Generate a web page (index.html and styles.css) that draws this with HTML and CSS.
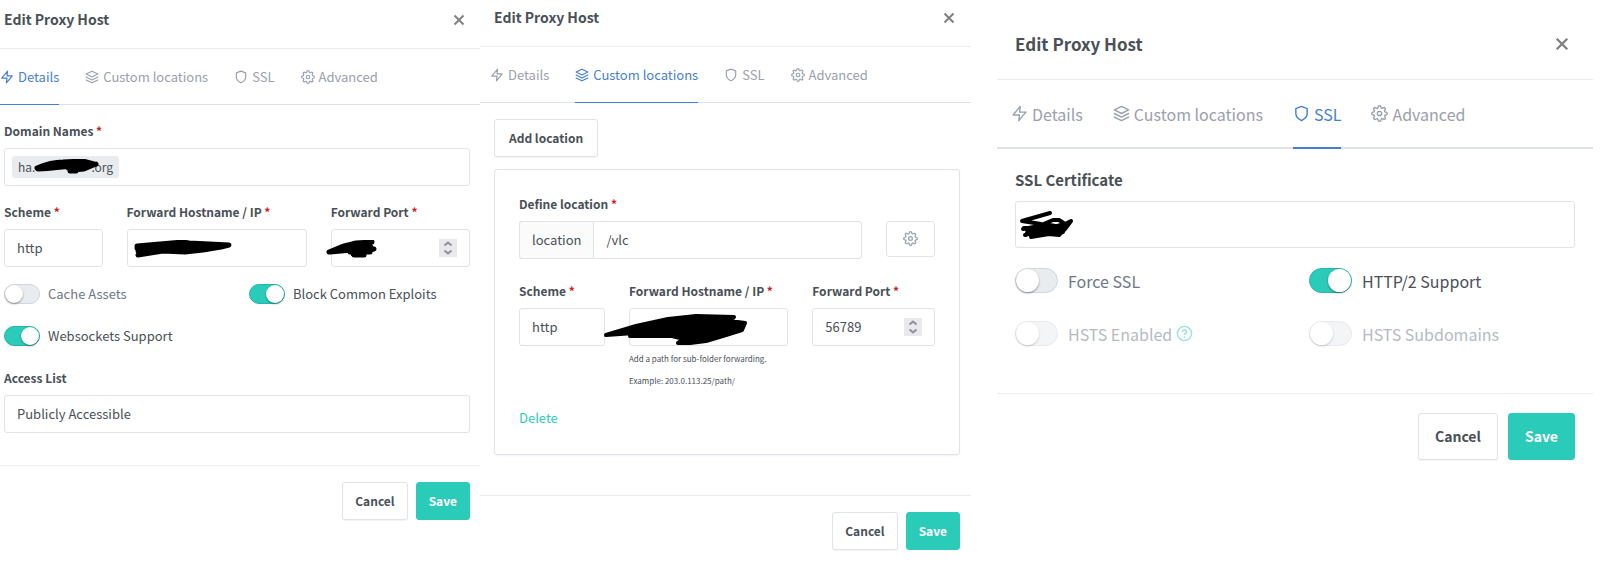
FILE: index.html
```html
<!DOCTYPE html>
<html lang="en">
<head>
<meta charset="utf-8">
<title>Edit Proxy Host</title>
<link rel="stylesheet" href="styles.css">
</head>
<body>
<svg class="sprite" aria-hidden="true">
  <symbol id="zap" viewBox="0 0 24 24"><path d="M13 2 3 14h9l-1 8 10-12h-9z"/></symbol>
  <symbol id="layers" viewBox="0 0 24 24"><path d="M12 2 2 7l10 5 10-5zM2 17l10 5 10-5M2 12l10 5 10-5"/></symbol>
  <symbol id="shield" viewBox="0 0 24 24"><path d="M12 22s8-4 8-10V5l-8-3-8 3v7c0 6 8 10 8 10z"/></symbol>
  <symbol id="settings" viewBox="0 0 24 24"><circle cx="12" cy="12" r="3"/><path d="M19.4 15a1.65 1.65 0 0 0 .33 1.82l.06.06a2 2 0 1 1-2.83 2.83l-.06-.06a1.65 1.65 0 0 0-2.8 1.17V21a2 2 0 0 1-4 0v-.09A1.65 1.65 0 0 0 9 19.4a1.65 1.65 0 0 0-1.82.33l-.06.06a2 2 0 1 1-2.83-2.83l.06-.06a1.65 1.65 0 0 0-1.17-2.8H3a2 2 0 0 1 0-4h.09A1.65 1.65 0 0 0 4.6 9a1.65 1.65 0 0 0-.33-1.82l-.06-.06a2 2 0 1 1 2.83-2.83l.06.06A1.65 1.65 0 0 0 9 4.6h.1A1.65 1.65 0 0 0 10 3.09V3a2 2 0 0 1 4 0v.09a1.65 1.65 0 0 0 2.8 1.17l.06-.06a2 2 0 1 1 2.83 2.83l-.06.06A1.65 1.65 0 0 0 19.4 9v.1a1.65 1.65 0 0 0 1.51 1H21a2 2 0 0 1 0 4h-.09a1.65 1.65 0 0 0-1.51 1z"/></symbol>
  <symbol id="help" viewBox="0 0 24 24"><circle cx="12" cy="12" r="10"/><path d="M9.09 9a3 3 0 0 1 5.83 1c0 2-3 3-3 3M12 17h.01"/></symbol>
  <symbol id="close" viewBox="0 0 12 12"><path d="m1.5 1.5 9 9m0-9-9 9"/></symbol>
  <symbol id="spin" viewBox="0 0 18 18"><path d="m5.5 6.500 3.500-3 3.500 3M5.500 11.500l3.500 3 3.500-3"/></symbol>
</svg>
<main class="board">

  <form class="modal modal-first">
    <header class="modal-header">
      <h2 class="modal-title">Edit Proxy Host</h2>
      <button class="close" type="button" aria-label="Close"><svg class="close-icon"><use href="#close"/></svg></button>
    </header>
    <nav class="tabs">
      <a class="tab active" href="#details"><svg class="icon"><use href="#zap"/></svg>Details</a>
      <a class="tab" href="#locations"><svg class="icon"><use href="#layers"/></svg>Custom locations</a>
      <a class="tab" href="#ssl"><svg class="icon"><use href="#shield"/></svg>SSL</a>
      <a class="tab" href="#advanced"><svg class="icon"><use href="#settings"/></svg>Advanced</a>
    </nav>
    <section class="modal-body">
      <div class="field">
        <label class="label" for="domains">Domain Names <span class="req">*</span></label>
        <div class="control tags">
          <span class="tag">ha.<span class="tag-hidden"></span>.org</span>
          <input class="tag-input" id="domains" type="text">
          <svg class="mark mark-domain" viewBox="0 0 66 16"><path d="M3 9Q17 3 29 3L49 2 60 5M4 10Q22 9 44 6M38 11 50 10 62 5M8 7Q20 4 34 6M36 12H42M48 4 46 8M12 8 40 5M34 9 54 6"/></svg>
        </div>
      </div>
      <div class="grid">
        <div class="field span-3">
          <label class="label" for="scheme1">Scheme <span class="req">*</span></label>
          <select class="control" id="scheme1"><option>http</option></select>
        </div>
        <div class="field span-5">
          <label class="label" for="host1">Forward Hostname / IP <span class="req">*</span></label>
          <div class="holder">
            <input class="control" id="host1" type="text">
            <svg class="mark mark-host" viewBox="0 0 100 18"><path d="M4 6 50 2 56 3 96 5 88 7 70 10 52 12 30 11 5 15M4 8 80 8M5 11 84 6M36 4 70 5M7 13 20 11"/></svg>
          </div>
        </div>
        <div class="field span-4">
          <label class="label" for="port1">Forward Port <span class="req">*</span></label>
          <div class="holder">
            <input class="control" id="port1" type="number">
            <svg class="spinner"><use href="#spin"/></svg>
            <svg class="mark mark-port" viewBox="0 0 52 18"><path d="M3 12 15 7 30 3 46 2M4 12 26 10 44 4M27 14 48 9M28 15 38 15M18 6 22 5M24 7 45 7M24 12 44 12"/></svg>
          </div>
        </div>
      </div>
      <div class="grid switches">
        <label class="switch span-6"><input type="checkbox">Cache Assets</label>
        <label class="switch span-6"><input type="checkbox" checked>Block Common Exploits</label>
        <label class="switch span-12"><input type="checkbox" checked>Websockets Support</label>
      </div>
      <div class="field">
        <label class="label" for="access">Access List</label>
        <select class="control" id="access"><option>Publicly Accessible</option></select>
      </div>
    </section>
    <footer class="modal-footer">
      <button class="btn" type="button">Cancel</button>
      <button class="btn btn-save" type="button">Save</button>
    </footer>
  </form>

  <form class="modal modal-second">
    <header class="modal-header">
      <h2 class="modal-title">Edit Proxy Host</h2>
      <button class="close" type="button" aria-label="Close"><svg class="close-icon"><use href="#close"/></svg></button>
    </header>
    <nav class="tabs">
      <a class="tab" href="#details"><svg class="icon"><use href="#zap"/></svg>Details</a>
      <a class="tab active" href="#locations"><svg class="icon"><use href="#layers"/></svg>Custom locations</a>
      <a class="tab" href="#ssl"><svg class="icon"><use href="#shield"/></svg>SSL</a>
      <a class="tab" href="#advanced"><svg class="icon"><use href="#settings"/></svg>Advanced</a>
    </nav>
    <section class="modal-body">
      <button class="btn btn-add" type="button">Add location</button>
      <div class="card">
        <div class="field">
          <label class="label" for="path">Define location <span class="req">*</span></label>
          <div class="grid">
            <div class="group span-10">
              <span class="prefix">location</span>
              <input class="control" id="path" type="text" value="/vlc">
            </div>
            <button class="btn btn-gear span-2" type="button" aria-label="Location settings"><svg class="icon"><use href="#settings"/></svg></button>
          </div>
        </div>
        <div class="grid">
          <div class="field span-3">
            <label class="label" for="scheme2">Scheme <span class="req">*</span></label>
            <select class="control" id="scheme2"><option>http</option></select>
          </div>
          <div class="field span-5">
            <label class="label" for="host2">Forward Hostname / IP <span class="req">*</span></label>
            <div class="holder">
              <input class="control" id="host2" type="text">
              <svg class="mark mark-path" viewBox="0 0 146 32"><path class="mark-fill" d="M4 21 34 12 66 5 94 2 132 3 128 7 143 9 140 16 124 21 104 27 88 29H76L82 25 70 22H28L32 19z"/></svg>
            </div>
            <p class="hint">Add a path for sub-folder forwarding.</p>
            <p class="hint">Example: 203.0.113.25/path/</p>
          </div>
          <div class="field span-4">
            <label class="label" for="port2">Forward Port <span class="req">*</span></label>
            <div class="holder">
              <input class="control" id="port2" type="number" value="56789">
              <svg class="spinner"><use href="#spin"/></svg>
            </div>
          </div>
        </div>
        <a class="delete" href="#delete">Delete</a>
      </div>
    </section>
    <footer class="modal-footer">
      <button class="btn" type="button">Cancel</button>
      <button class="btn btn-save" type="button">Save</button>
    </footer>
  </form>

  <form class="modal modal-large">
    <header class="modal-header">
      <h2 class="modal-title">Edit Proxy Host</h2>
      <button class="close" type="button" aria-label="Close"><svg class="close-icon"><use href="#close"/></svg></button>
    </header>
    <nav class="tabs">
      <a class="tab" href="#details"><svg class="icon"><use href="#zap"/></svg>Details</a>
      <a class="tab" href="#locations"><svg class="icon"><use href="#layers"/></svg>Custom locations</a>
      <a class="tab active" href="#ssl"><svg class="icon"><use href="#shield"/></svg>SSL</a>
      <a class="tab" href="#advanced"><svg class="icon"><use href="#settings"/></svg>Advanced</a>
    </nav>
    <section class="modal-body">
      <div class="field">
        <label class="label" for="cert">SSL Certificate</label>
        <div class="holder">
          <select class="control" id="cert"><option></option></select>
          <svg class="mark mark-cert" viewBox="0 0 56 30"><path d="M31 3 3 11 22 14M4 19 20 16 34 10H40L46 14 34 17 8 20M6 25 20 21 44 15 52 11 46 19 40 25 30 24 12 27M8 23 40 22M26 14 46 18M5 18 30 17 45 20M24 19 44 22"/></svg>
        </div>
      </div>
      <div class="grid switches">
        <label class="switch span-6"><input type="checkbox">Force SSL</label>
        <label class="switch span-6"><input type="checkbox" checked>HTTP/2 Support</label>
        <label class="switch span-6 off"><input type="checkbox" disabled>HSTS Enabled<svg class="icon help"><use href="#help"/></svg></label>
        <label class="switch span-6 off"><input type="checkbox" disabled>HSTS Subdomains</label>
      </div>
    </section>
    <footer class="modal-footer">
      <button class="btn" type="button">Cancel</button>
      <button class="btn btn-save" type="button">Save</button>
    </footer>
  </form>

</main>
</body>
</html>
```
FILE: styles.css
```css
* { box-sizing: border-box; }

body {
  margin: 0;
  background: #fff;
  color: #495057;
  font-family: "Noto Sans CJK SC", "Noto Sans", sans-serif;
}

.sprite { position: absolute; width: 0; height: 0; }

.board {
  display: grid;
  grid-template-columns: 480fr 491fr 622fr;
  align-items: start;
  padding-right: 22px;
}

.modal {
  --text: 13px;
  --title: 14px;
  --small: 12px;
  --btn-text: 12px;
  --control: 38px;
  --inset: 12px;
  --switch-w: 36px;
  --switch-h: 20px;
  --tab-h: 56px;
  --tab-gap: 26px;
  --tab-line: 1px;
  --icon: 14px;
  --pad-l: 14px;
  --pad-r: 11px;
  font-size: var(--text);
  line-height: 20px;
}
.modal-first { --pad-l: 4px; --pad-r: 10px; }
.modal-large {
  --text: 16px;
  --title: 17px;
  --small: 15px;
  --btn-text: 14px;
  --control: 47px;
  --inset: 16px;
  --switch-w: 43px;
  --switch-h: 25px;
  --tab-h: 69px;
  --tab-gap: 30px;
  --tab-line: 2px;
  --icon: 17px;
  --pad-l: 18px;
  --pad-r: 18px;
  margin-left: 26px;
}

.modal-header {
  display: flex;
  align-items: center;
  justify-content: space-between;
  padding: 9px var(--pad-r) 18px var(--pad-l);
  border-bottom: 1px solid #e9ecef;
}
.modal-second .modal-header { padding-top: 7px; }
.modal-large .modal-header { padding-top: 32px; padding-bottom: 24px; }

.modal-title {
  margin: 0;
  font-size: var(--title);
  line-height: 21px;
  font-weight: 700;
}
.modal-large .modal-title { line-height: 23px; }

.close {
  display: flex;
  padding: 0 5px;
  border: 0;
  background: none;
  color: #808080;
}
.close-icon { width: 12px; height: 12px; fill: none; stroke: currentColor; stroke-width: 2; }
.modal-large .close { padding: 0 6px; }
.modal-large .close-icon { width: 14px; height: 14px; }

.tabs {
  display: flex;
  gap: var(--tab-gap);
  padding-left: calc(var(--pad-l) - 4px);
  box-shadow: inset 0 calc(-1 * var(--tab-line)) #dee2e6;
}
.tab {
  display: flex;
  align-items: center;
  gap: 4px;
  height: var(--tab-h);
  border-bottom: var(--tab-line) solid transparent;
  color: #9aa0ac;
  text-decoration: none;
  white-space: nowrap;
}
.tab.active { color: #467fcf; border-bottom-color: #467fcf; }

.icon {
  flex: none;
  width: var(--icon);
  height: var(--icon);
  fill: none;
  stroke: currentColor;
  stroke-width: 2;
  stroke-linecap: round;
  stroke-linejoin: round;
}

.modal-body { padding: 16px var(--pad-r) 32px var(--pad-l); }
.modal-second .modal-body { padding-bottom: 40px; }
.modal-large .modal-body { padding-top: 21px; padding-bottom: 47px; }

.field { display: flex; flex-direction: column; min-width: 0; }
.label {
  margin-bottom: 7px;
  font-size: var(--small);
  line-height: 20px;
  font-weight: 700;
  white-space: nowrap;
}
.modal-large .label { margin-bottom: 11px; }
.req { color: #cd201f; }

.grid {
  display: grid;
  grid-template-columns: repeat(12, minmax(0, 1fr));
  column-gap: 24px;
}
.span-2 { grid-column: span 2; }
.span-3 { grid-column: span 3; }
.span-4 { grid-column: span 4; }
.span-5 { grid-column: span 5; }
.span-6 { grid-column: span 6; }
.span-10 { grid-column: span 10; }
.span-12 { grid-column: span 12; }

.control {
  display: block;
  width: 100%;
  height: var(--control);
  padding: 0 var(--inset) 2px;
  border: 1px solid #dfe3ec;
  border-radius: 3px;
  background: #fff;
  color: #495057;
  font-family: inherit;
  font-size: var(--text);
  appearance: none;
}
.control::-webkit-inner-spin-button { appearance: none; }

.holder { position: relative; }

.tags {
  position: relative;
  display: flex;
  align-items: center;
  padding: 0 7px;
}
.tag {
  display: flex;
  padding: 0 6px 1px;
  border-radius: 3px;
  background: #e9ecef;
  font-size: var(--small);
  line-height: 21px;
}
.tag-hidden { width: 56px; }
.tag-input { flex: 1; min-width: 0; border: 0; outline: 0; font: inherit; }
.modal-first .field + .grid { margin-top: 16px; }

.spinner {
  position: absolute;
  right: 13px;
  top: 10px;
  width: 18px;
  height: 18px;
  background: #e9e9ed;
  fill: none;
  stroke: #8f8f9d;
  stroke-width: 2;
}

/* Hand-drawn strokes that hide private values */
.mark {
  position: absolute;
  fill: none;
  stroke: #000;
  stroke-width: 5;
  stroke-linecap: round;
  stroke-linejoin: round;
}
.mark-fill { fill: #000; }
.mark-domain { left: 29px; top: 10px; width: 66px; height: 16px; }
.mark-host { left: 6px; top: 11px; width: 100px; height: 18px; }
.mark-port { left: -5px; top: 11px; width: 52px; height: 18px; }
.mark-path { left: -27px; top: 6px; width: 146px; height: 32px; stroke-width: 4; }
.mark-cert { left: 4px; top: 9px; width: 56px; height: 30px; stroke-width: 4; }

.switches { row-gap: 22px; margin: 17px 0 22px; }
.switch {
  display: flex;
  align-items: center;
  gap: 8px;
  line-height: 20px;
  color: #6e7687;
}
.switch:has(:checked) { color: #495057; }
.switch.off { opacity: .5; }
.switch input {
  position: relative;
  flex: none;
  width: var(--switch-w);
  height: var(--switch-h);
  margin: 0;
  border: 1px solid #d0d5de;
  border-radius: 13px;
  background: #e9ecef;
  appearance: none;
}
.switch input::before {
  content: "";
  position: absolute;
  left: 0;
  top: 0;
  height: 100%;
  aspect-ratio: 1;
  border-radius: 50%;
  background: #fff;
  box-shadow: 0 1px 2px rgba(0, 0, 0, .4);
}
.switch input:checked { background: #2bcbba; border-color: #26b5a8; }
.switch input:checked::before { left: auto; right: 0; }
.modal-large .switches { gap: 28px; margin: 20px 0 0; }
.modal-large .switch { gap: 10px; }
.help { margin-left: -6px; color: #2bcbba; }

.btn {
  height: var(--control);
  padding: 0 var(--inset) 2px;
  border: 1px solid #dfe3ec;
  border-radius: 3px;
  background: #fff;
  box-shadow: 0 1px 1px rgba(0, 0, 0, .05);
  color: #495057;
  font-family: inherit;
  font-size: var(--btn-text);
  font-weight: 700;
}
.btn-add { padding: 0 14px 2px; }
.btn-save { border-color: #2bcbba; background: #2bcbba; box-shadow: none; color: #fff; }
.btn-gear {
  display: flex;
  align-items: center;
  justify-content: center;
  height: 36px;
  padding: 0 0 2px;
  box-shadow: none;
  color: #9aa0ac;
}
.btn-gear .icon { width: 15px; height: 15px; }

.card {
  margin-top: 12px;
  padding: 24px 24px 26px;
  border: 1px solid #dfe3ec;
  border-radius: 3px;
  box-shadow: 0 1px 2px rgba(0, 0, 0, .05);
}
.group { display: flex; }
.prefix {
  flex: none;
  padding: 0 12px;
  border: 1px solid #dfe3ec;
  border-right: 0;
  border-radius: 3px 0 0 3px;
  background: #fbfbfc;
  line-height: 35px;
}
.group .control { flex: 1; min-width: 0; border-radius: 0 3px 3px 0; }
.card .field + .grid { margin-top: 22px; }

.hint { margin: 4px 0 0; font-size: 8px; line-height: 18px; white-space: nowrap; }
.delete { display: inline-block; margin-top: 18px; color: #2bcbba; text-decoration: none; }

.modal-footer {
  display: flex;
  justify-content: flex-end;
  gap: 8px;
  padding: 16px var(--pad-r);
  border-top: 1px solid #e9ecef;
}
.modal-large .modal-footer { gap: 10px; padding-top: 19px; }
```
